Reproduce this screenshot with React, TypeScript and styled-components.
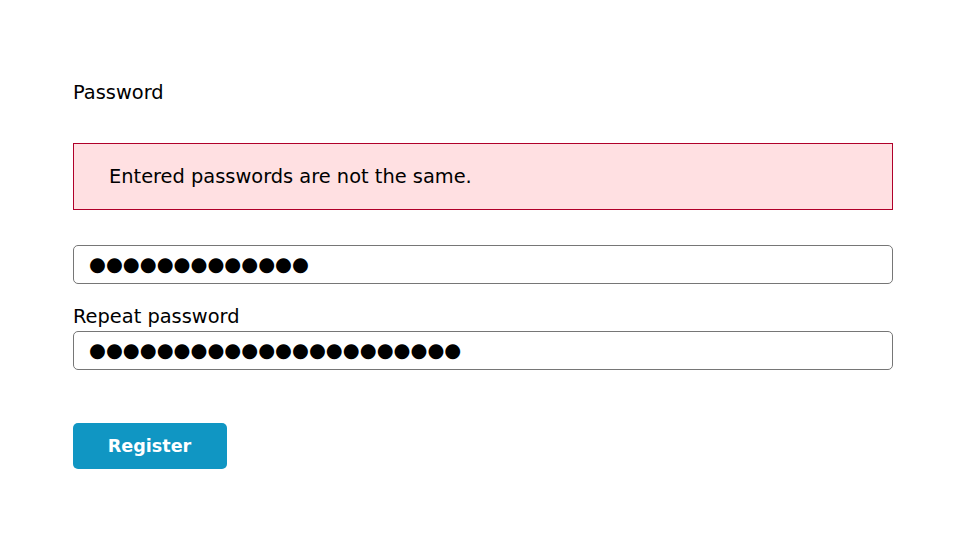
import React, { useState } from "react";
import styled, { createGlobalStyle } from "styled-components";

const GlobalStyle = createGlobalStyle`
  html, body {
    margin: 0;
    padding: 0;
    background: #ffffff;
  }

  body {
    font-family: "DejaVu Sans", "Liberation Sans", sans-serif;
    color: #000000;
  }
`;

// the reference shows big round bullets, so mask the value ourselves
function PasswordField(props: {
  id: string;
  value: string;
  onChange: (v: string) => void;
}) {
  const masked = "\u25CF".repeat(props.value.length);
  return (
    <StyledInput
      id={props.id}
      type="text"
      autoComplete="off"
      value={masked}
      onChange={(e) => {
        const next = e.target.value;
        if (next.length < masked.length) {
          props.onChange(props.value.slice(0, next.length));
        } else {
          props.onChange(props.value + next.replace(/\u25CF/g, ""));
        }
      }}
    />
  );
}

export default function App() {
  const [password, setPassword] = useState("abcdefghijklm");
  const [repeat, setRepeat] = useState("abcdefghijklmnopqrstuv");

  return (
    <>
      <GlobalStyle />
      <StyledForm onSubmit={(e) => e.preventDefault()}>
        <StyledLabel htmlFor="password" $spacing={39}>
          Password
        </StyledLabel>
        <StyledErrorBox role="alert">
          Entered passwords are not the same.
        </StyledErrorBox>
        <PasswordField id="password" value={password} onChange={setPassword} />
        <StyledLabel htmlFor="repeat" $spacing={3}>
          Repeat password
        </StyledLabel>
        <PasswordField id="repeat" value={repeat} onChange={setRepeat} />
        <StyledButton type="submit">Register</StyledButton>
      </StyledForm>
    </>
  );
}

export const StyledForm = styled.form`
  display: flex;
  flex-direction: column;
  align-items: flex-start;
  width: 820px;
  padding: 81px 0 0 73px;
`;

export const StyledLabel = styled.label<{ $spacing: number }>`
  display: block;
  font-size: 19.4px;
  line-height: 23px;
  margin-bottom: ${(p) => p.$spacing}px;
`;

export const StyledErrorBox = styled.div`
  box-sizing: border-box;
  width: 100%;
  height: 67px;
  display: flex;
  align-items: center;
  padding: 0 35px;
  margin-bottom: 35px;

  background: #ffe0e2;
  border: 1px solid #b0002a;

  font-size: 19.4px;
  line-height: 23px;
`;

export const StyledInput = styled.input`
  box-sizing: border-box;
  width: 100%;
  height: 39px;
  padding: 0 15px;
  margin: 0 0 21px;

  border: 1px solid #767676;
  border-radius: 5px;
  outline: none;

  font-family: "DejaVu Sans", sans-serif;
  font-size: 19.4px;
  color: #000000;
  background: #ffffff;

  &:last-of-type {
    margin-bottom: 53px;
  }
`;

export const StyledButton = styled.button`
  width: 154px;
  height: 46px;
  padding: 0 1px 1px 0;
  border: none;
  border-radius: 5px;
  background: #1096c3;
  color: #ffffff;

  font-family: "DejaVu Sans", sans-serif;
  font-weight: 700;
  font-size: 17.6px;
  cursor: pointer;
`;
